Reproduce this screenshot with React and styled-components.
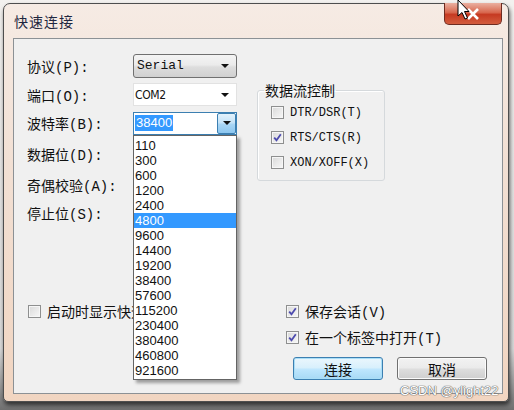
import React from 'react';
import styled, { createGlobalStyle } from 'styled-components';

const UI = `"Liberation Mono", "Noto Sans CJK SC", monospace`;
const CJK = `"Noto Sans CJK SC", "Liberation Sans", sans-serif`;

const GlobalStyle = createGlobalStyle`
  body {
    margin: 0;
    background: #ebebeb;
  }
  #root {
    width: 514px;
    height: 410px;
    overflow: hidden;
  }
`;

const Stage = styled.div`
  position: relative;
  width: 514px;
  height: 410px;
  padding: 3px 0 0 3px;
  box-sizing: border-box;
  background: linear-gradient(#f3f1ef, #d9d9d9 85%, #6f6f6f);
`;

const Window = styled.div`
  width: 506px;
  height: 399px;
  box-sizing: border-box;
  display: flex;
  flex-direction: column;
  padding: 0 5px 7px 9px;
  border: 1px solid #4e4e4e;
  border-radius: 7px 7px 5px 5px;
  background: linear-gradient(#f6ebe4, #f2e0d4 40%, #f1d5c1);
  box-shadow: 1px 3px 4px rgba(0, 0, 0, 0.6);
`;

const TitleBar = styled.div`
  height: 34px;
  flex-shrink: 0;
  display: flex;
  align-items: center;
  justify-content: space-between;
  padding-left: 1px;
`;

const Title = styled.div`
  font-family: ${CJK};
  font-size: 14px;
  letter-spacing: 1px;
  color: #1f2740;
`;

const CloseButton = styled.div`
  align-self: flex-start;
  margin: -1px 1px 0 0;
  width: 58px;
  height: 22px;
  box-sizing: border-box;
  display: flex;
  align-items: center;
  justify-content: center;
  border: 1px solid #6e2b20;
  border-top: none;
  border-radius: 0 0 5px 5px;
  background: linear-gradient(#eab0a0, #d8684f 45%, #c63a22 55%, #d35c3d);
`;

const Client = styled.div`
  flex: 1;
  position: relative;
  display: flex;
  flex-direction: column;
  padding-bottom: 13px;
  border: 1px solid #8c9195;
  background: #f0f0f0;
`;

const TopArea = styled.div`
  display: flex;
  align-items: flex-start;
  padding: 12px 0 0 13px;
`;

const FieldGrid = styled.div`
  display: grid;
  grid-template-columns: 106px 104px;
  grid-template-rows: 29px 29px 28px 34px 28px 28px;
  align-items: center;
`;

const Label = styled.div`
  font-family: ${UI};
  font-size: 14px;
  color: #111;
  white-space: nowrap;
`;

const Arrow = styled.span`
  width: 0;
  height: 0;
  border-left: 4px solid transparent;
  border-right: 4px solid transparent;
  border-top: 4px solid #111;
`;

const Combo = styled.div`
  height: ${p => (p.$kind === 'list' ? 24 : 23)}px;
  box-sizing: border-box;
  display: flex;
  align-items: center;
  justify-content: space-between;
  padding-left: ${p => (p.$kind === 'list' ? 3 : 1)}px;
  padding-right: ${p => (p.$kind === 'edit' ? 0 : 7)}px;
  border: 1px solid ${p => (p.$kind === 'list' ? '#707070' : p.$kind === 'edit' ? '#3c7fb1' : '#e2e2e2')};
  border-radius: ${p => (p.$kind === 'list' ? 3 : 0)}px;
  background: ${p =>
    p.$kind === 'list'
      ? 'linear-gradient(#f4f4f4, #ebebeb 45%, #dddddd 55%, #d0d0d0)'
      : '#ffffff'};
`;

const ComboText = styled.span`
  font-family: ${p => (p.$mono ? UI : `"Liberation Sans Narrow", "DejaVu Sans Condensed", "Liberation Sans", sans-serif`)};
  font-size: ${p => (p.$mono ? 13 : 12)}px;
  letter-spacing: ${p => (p.$mono ? 0 : -0.4)}px;
  color: #111;
`;

const Selection = styled.span`
  font-family: "Liberation Sans", sans-serif;
  font-size: 13px;
  line-height: 16px;
  padding: 0 1px;
  background: #3399ff;
  color: #fff;
`;

const DropButton = styled.div`
  width: 19px;
  align-self: stretch;
  box-sizing: border-box;
  display: flex;
  align-items: center;
  justify-content: center;
  border: 1px solid #3c7fb1;
  border-radius: 2px;
  background: linear-gradient(#e3f2fc, #c6e4f8 45%, #a9d6f5 55%, #8cc6ef);
`;

const FlowGroup = styled.fieldset`
  margin: 29px 0 0 20px;
  padding: 0 0 0 13px;
  width: 128px;
  height: 101px;
  box-sizing: border-box;
  min-width: 0;
  border: 1px solid #d5d9dc;
  border-radius: 3px;
  box-shadow: inset 1px 1px 0 #ffffff;
  display: grid;
  grid-auto-rows: 25px;
  align-content: start;
`;

const Legend = styled.legend`
  margin-left: -7px;
  padding: 0 1px;
  font-family: ${CJK};
  font-size: 14px;
  line-height: 20px;
  color: #111;
`;

const CheckRow = styled.label`
  display: flex;
  align-items: center;
  gap: 6px;
  height: ${p => p.$h || 20}px;
  font-family: ${UI};
  font-size: ${p => p.$size || 14}px;
  color: #111;
  white-space: nowrap;
`;

const Box = styled.span`
  width: 13px;
  height: 13px;
  flex-shrink: 0;
  box-sizing: border-box;
  display: flex;
  align-items: center;
  justify-content: center;
  border: 1px solid #8e8f8f;
  box-shadow: inset 0 0 0 1px #f6f6f6;
  background: linear-gradient(135deg, #d9d9d9, #f8f8f8);
`;

const BottomArea = styled.div`
  margin-top: auto;
  display: flex;
  align-items: flex-start;
  padding: 0 15px 0 14px;
`;

const RightCol = styled.div`
  margin-left: auto;
  width: 201px;
  display: flex;
  flex-direction: column;
  gap: 6px;
`;

const ButtonRow = styled.div`
  display: flex;
  gap: 14px;
  padding-left: 7px;
  margin-top: 4px;
`;

const Button = styled.div`
  width: 90px;
  height: 23px;
  box-sizing: border-box;
  display: flex;
  align-items: center;
  justify-content: center;
  font-family: ${CJK};
  font-size: 14px;
  color: #111;
  border: 1px solid ${p => (p.$default ? '#3c7fb1' : '#707070')};
  border-radius: 3px;
  box-shadow: ${p => (p.$default ? 'inset 0 0 0 1px #a9def7' : 'inset 0 0 0 1px #fbfbfb')};
  background: ${p =>
    p.$default
      ? 'linear-gradient(#eaf6fd, #d9f0fc 45%, #bee6fd 55%, #a7d9f5)'
      : 'linear-gradient(#f2f2f2, #ebebeb 45%, #dddddd 55%, #cfcfcf)'};
`;

const DropList = styled.ul`
  position: absolute;
  left: 119px;
  top: 96px;
  width: 104px;
  box-sizing: border-box;
  margin: 0;
  padding: 2px 0 1px;
  list-style: none;
  background: #ffffff;
  border: 1px solid #646464;
  box-shadow: 3px 3px 3px rgba(0, 0, 0, 0.35);
`;

const DropItem = styled.li`
  height: 15px;
  line-height: 15px;
  padding-left: 1px;
  font-family: "Liberation Sans", sans-serif;
  font-size: 13px;
  color: ${p => (p.$active ? '#ffffff' : '#111')};
  background: ${p => (p.$active ? '#3399ff' : 'transparent')};
`;

const Watermark = styled.div`
  position: absolute;
  left: 400px;
  top: 383px;
  font-family: "Liberation Sans", sans-serif;
  font-size: 13px;
  color: #ffffff;
  text-shadow: 0 0 1px #606060, 0 0 1px #606060, 0 0 1px #606060;
`;

const Cursor = styled.svg`
  position: absolute;
  left: 457px;
  top: -1px;
`;

const CheckMark = () => (
  <svg width="9" height="9" viewBox="0 0 9 9">
    <path d="M1.2 4.6 L3.5 7.2 L7.8 1.3" fill="none" stroke="#4d4bae" strokeWidth="1.8" />
  </svg>
);

const Check = ({ checked, children, ...rest }) => (
  <CheckRow {...rest}>
    <Box>{checked && <CheckMark />}</Box>
    <span>{children}</span>
  </CheckRow>
);

const bauds = [
  '110', '300', '600', '1200', '2400', '4800', '9600', '14400',
  '19200', '38400', '57600', '115200', '230400', '380400', '460800', '921600',
];

const fields = [
  {
    label: '协议(P):',
    control: (
      <Combo $kind="list">
        <ComboText $mono>Serial</ComboText>
        <Arrow />
      </Combo>
    ),
  },
  {
    label: '端口(O):',
    control: (
      <Combo $kind="plain">
        <ComboText>COM2</ComboText>
        <Arrow />
      </Combo>
    ),
  },
  {
    label: '波特率(B):',
    control: (
      <Combo $kind="edit">
        <Selection>38400</Selection>
        <DropButton><Arrow /></DropButton>
      </Combo>
    ),
  },
  { label: '数据位(D):' },
  { label: '奇偶校验(A):' },
  { label: '停止位(S):' },
];

export default function App() {
  return (
    <Stage>
      <GlobalStyle />
      <Window>
        <TitleBar>
          <Title>快速连接</Title>
          <CloseButton>
            <svg width="14" height="12" viewBox="0 0 14 12">
              <path d="M2 1 L12 11 M12 1 L2 11" stroke="#ffffff" strokeWidth="2.6" />
            </svg>
          </CloseButton>
        </TitleBar>
        <Client>
          <TopArea>
            <FieldGrid>
              {fields.map(f => (
                <React.Fragment key={f.label}>
                  <Label>{f.label}</Label>
                  {f.control || <span />}
                </React.Fragment>
              ))}
            </FieldGrid>
            <FlowGroup>
              <Legend>数据流控制</Legend>
              <Check $size={12} $h={25}>DTR/DSR(T)</Check>
              <Check $size={12} $h={25} checked>RTS/CTS(R)</Check>
              <Check $size={12} $h={25}>XON/XOFF(X)</Check>
            </FlowGroup>
          </TopArea>
          <BottomArea>
            <Check>启动时显示快速连接</Check>
            <RightCol>
              <Check checked>保存会话(V)</Check>
              <Check checked>在一个标签中打开(T)</Check>
              <ButtonRow>
                <Button $default>连接</Button>
                <Button>取消</Button>
              </ButtonRow>
            </RightCol>
          </BottomArea>
          <DropList>
            {bauds.map(b => (
              <DropItem key={b} $active={b === '4800'}>{b}</DropItem>
            ))}
          </DropList>
        </Client>
      </Window>
      <Watermark>CSDN @ylight22</Watermark>
      <Cursor width="14" height="22" viewBox="0 0 14 22">
        <path d="M1 1 L1 17 L5 13.5 L8 20 L10.5 19 L7.5 12.5 L12 12.5 Z" fill="#ffffff" stroke="#000" strokeWidth="1" />
      </Cursor>
    </Stage>
  );
}
